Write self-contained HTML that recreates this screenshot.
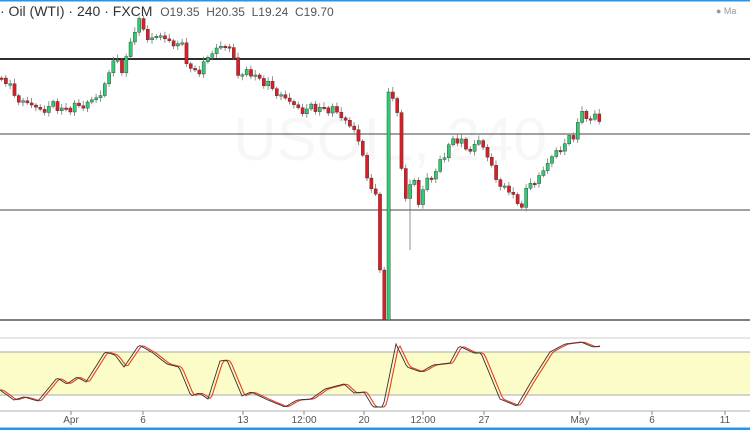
<!DOCTYPE html>
<html><head><meta charset="utf-8"><style>
html,body{margin:0;padding:0;width:750px;height:430px;overflow:hidden;background:#fff;font-family:"Liberation Sans",sans-serif}
#t{position:absolute;left:0;top:3px;font-size:14px;color:#333;white-space:nowrap}
#t span{font-size:12px;color:#555}
#m{position:absolute;left:716px;top:6px;font-size:9px;color:#999}
.ax{position:absolute;top:415px;font-size:10px;color:#555;transform:translateX(-50%)}
</style></head><body>
<svg id="s" width="750" height="430" style="position:absolute;left:0;top:0">
<rect x="0" y="0" width="750" height="1.5" fill="#2196f3"/>
<rect x="0" y="427.5" width="750" height="2.5" fill="#2196f3"/>
<text x="390" y="160" font-size="60" fill="#f7f7f7" font-family="Liberation Sans" text-anchor="middle">USOIL, 240</text>
<rect x="0" y="352" width="750" height="43" fill="#fbfcc8"/>
<line x1="0" y1="352" x2="750" y2="352" stroke="#aaa" stroke-width="1"/>
<line x1="0" y1="395" x2="750" y2="395" stroke="#aaa" stroke-width="1"/>
<line x1="0" y1="338" x2="750" y2="338" stroke="#ccc" stroke-width="1"/>
<line x1="0" y1="411" x2="750" y2="411" stroke="#ccc" stroke-width="1.5"/>
<line x1="0" y1="59" x2="750" y2="59" stroke="#111" stroke-width="1.8"/>
<line x1="0" y1="134" x2="750" y2="134" stroke="#444" stroke-width="1"/>
<line x1="0" y1="210" x2="750" y2="210" stroke="#444" stroke-width="1"/>
<line x1="0" y1="320" x2="750" y2="320" stroke="#333" stroke-width="1.2"/>
<g id="c"></g>
</svg>
<div id="t">· Oil (WTI) · 240 · FXCM &nbsp;<span>O19.35 &nbsp;H20.35 &nbsp;L19.24 &nbsp;C19.70</span></div>
<div id="m">● Ma</div>
<div class="ax" style="left:71px">Apr</div><div class="ax" style="left:143px">6</div><div class="ax" style="left:243px">13</div><div class="ax" style="left:304px">12:00</div><div class="ax" style="left:364px">20</div><div class="ax" style="left:423px">12:00</div><div class="ax" style="left:484px">27</div><div class="ax" style="left:580px">May</div><div class="ax" style="left:652px">6</div><div class="ax" style="left:725px">11</div>
<script>
(function(){
var K=[[0,78],[5,80],[12,95],[20,100],[30,105],[40,110],[50,105],[60,108],[70,108],[80,105],[90,100],[100,95],[110,60],[115,62],[120,70],[127,50],[132,30],[138,22],[145,35],[150,38],[158,35],[165,40],[172,42],[180,45],[185,60],[190,70],[200,70],[210,50],[220,46],[230,48],[235,70],[240,75],[250,72],[260,80],[270,88],[280,95],[290,103],[300,110],[310,108],[320,107],[330,110],[340,114],[347,125],[353,130],[360,150],[368,185],[375,200],[380,270],[384,320],[388,92],[392,95],[397,125],[400,170],[404,195],[408,185],[413,180],[418,210],[423,180],[430,175],[436,170],[440,160],[447,145],[452,138],[458,140],[465,150],[472,145],[478,140],[483,150],[487,160],[493,170],[497,185],[503,190],[508,188],[512,195],[518,208],[522,200],[527,185],[535,178],[541,172],[548,160],[555,150],[562,145],[567,140],[572,135],[577,120],[581,110],[585,115],[590,125],[594,112],[598,118]];
function interp(A,x){for(var i=1;i<A.length;i++){if(x<=A[i][0]){var a=A[i-1],b=A[i];return a[1]+(b[1]-a[1])*(x-a[0])/(b[0]-a[0]);}}return A[A.length-1][1];}
var g='',prev=78,step=4.3;
for(var i=0;i*step<=600;i++){var x=i*step;var c=interp(K,x);if(i%3==1)c+=4;if(i%5==2)c-=4;
var o=prev;
if(i==88){c=270;}
if(i==89){o=prev;c=320;}
if(i==90){o=320;c=92;}
var t1=Math.min(o,c),b1=Math.max(o,c);if(b1-t1<1.5)b1=t1+1.5;
var col=c<o?'#2ecc71':'#e01b24';
var hw=t1-2-(i%4),lw=b1+2+(i%3);if(x>405&&x<410)lw=250;if(i==89||i==90)lw=320;
g+='<line x1="'+(x+1.5)+'" y1="'+hw+'" x2="'+(x+1.5)+'" y2="'+lw+'" stroke="#777" stroke-width="0.8"/>';
g+='<rect x="'+x+'" y="'+t1+'" width="3.2" height="'+(b1-t1)+'" fill="'+col+'" stroke="#333" stroke-width="0.4"/>';
prev=c;}
var S=[[0,390],[14,400],[24,397],[38,401],[57,378],[67,384],[77,377],[86,382],[105,352],[115,355],[124,367],[139,345],[153,353],[167,364],[179,367],[191,396],[199,393],[208,399],[220,361],[227,360],[242,396],[251,392],[268,400],[285,407],[297,400],[311,399],[325,389],[344,384],[354,393],[364,392],[373,407],[383,407],[396,344],[407,367],[421,372],[433,365],[450,363],[459,346],[474,353],[481,353],[500,399],[517,406],[531,382],[550,352],[565,344],[581,342],[593,347],[600,346]];
var pb='',pr='';for(var x=0;x<=600;x+=2){pb+=(x?'L':'M')+x+' '+interp(S,x).toFixed(1);pr+=(x?'L':'M')+x+' '+(x<4?interp(S,0):(interp(S,x-2)*0.5+interp(S,x-4)*0.5)).toFixed(1);}
g+='<path d="'+pr+'" fill="none" stroke="#f03a1a" stroke-width="1.1"/>';
g+='<path d="'+pb+'" fill="none" stroke="#333" stroke-width="0.9"/>';
[71,143,243,304,364,423,484,580,652,725].forEach(function(t){g+='<line x1="'+t+'" y1="411" x2="'+t+'" y2="415" stroke="#888"/>';});
document.getElementById('c').innerHTML=g;
})();
</script>
</body></html>
